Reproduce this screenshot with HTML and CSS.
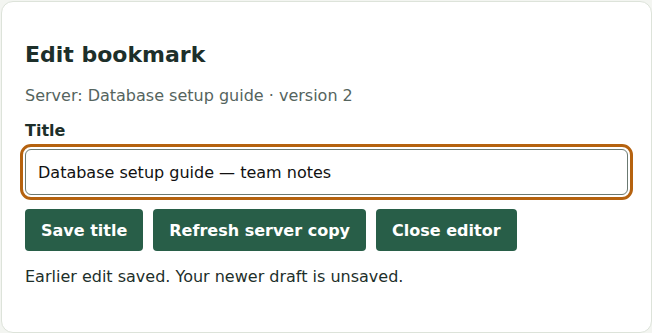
FILE: index.html
```html
<!DOCTYPE html>
<html>
<head>
<meta charset="utf-8">
<link rel="stylesheet" href="styles.css">
</head>
<body>
<section class="card">
  <h1 class="title">Edit bookmark</h1>
  <p class="meta">Server: Database setup guide · version 2</p>
  <label class="label" for="t">Title</label>
  <div class="field">
    <input id="t" class="input" type="text" value="Database setup guide — team notes">
  </div>
  <div class="actions">
    <button class="btn">Save title</button>
    <button class="btn">Refresh server copy</button>
    <button class="btn">Close editor</button>
  </div>
  <p class="status">Earlier edit saved. Your newer draft is unsaved.</p>
</section>
</body>
</html>
```

FILE: styles.css
```css
html, body {
  margin: 0;
  padding: 0;
  background: #f3f5f1;
}
body {
  font-family: "DejaVu Sans", sans-serif;
  color: #1d2f2a;
}
.card {
  box-sizing: border-box;
  width: 651px;
  height: 332px;
  margin: 1px 0 0 1px;
  background: #ffffff;
  border: 1px solid #dde3da;
  border-radius: 12px;
  padding: 38px 23px 0 23px;
}
.title {
  margin: 0;
  font-size: 22px;
  line-height: 30px;
  font-weight: bold;
  color: #1d2f2a;
}
.meta {
  margin: 16px 0 0;
  font-size: 16px;
  line-height: 20px;
  color: #55645e;
}
.label {
  display: block;
  margin-top: 15px;
  font-size: 16px;
  font-weight: bold;
  line-height: 20px;
}
.field {
  margin-top: 8px;
}
.input {
  box-sizing: border-box;
  width: 100%;
  height: 46px;
  margin: 0;
  padding: 0 12px;
  border: 1px solid #6b7a72;
  border-radius: 6px;
  font-family: "DejaVu Sans", sans-serif;
  font-size: 16px;
  color: #111;
  background: #fff;
  outline: 3px solid #b5620f;
  outline-offset: 2px;
}
.actions {
  display: flex;
  gap: 10px;
  margin-top: 14px;
}
.btn {
  height: 42px;
  padding: 0 16px;
  border: 0;
  border-radius: 4px;
  background: #285e48;
  color: #fff;
  font-family: "DejaVu Sans", sans-serif;
  font-size: 16px;
  font-weight: bold;
}
.status {
  margin: 16px 0 0;
  font-size: 16px;
  line-height: 20px;
  color: #1d2f2a;
}
```
